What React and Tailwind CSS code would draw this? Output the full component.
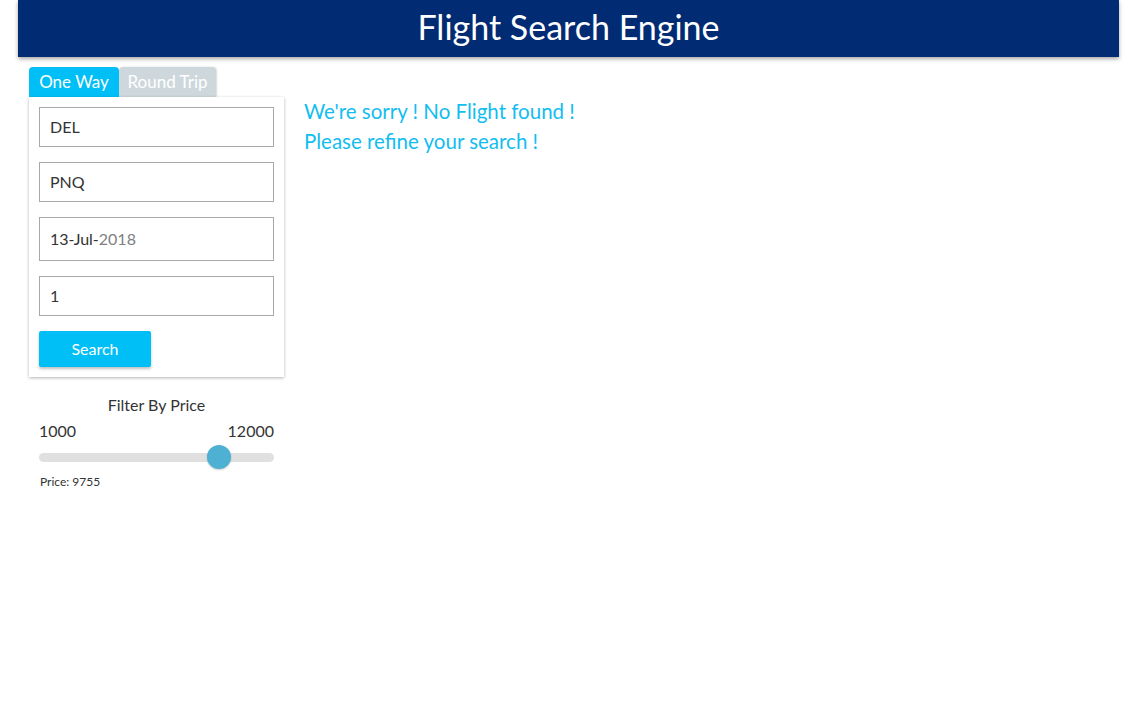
import React from "react";

export default function App() {
  return (
    <div className="min-h-[720px] bg-white" style={{ fontFamily: "Lato, 'Open Sans', sans-serif" }}>
      <header className="ml-[18px] w-[1101px] h-[57px] bg-[#012b73] flex items-center justify-center pb-[3px] shadow-[0_2px_4px_rgba(0,0,0,0.35)]">
        <h1 className="text-white text-[34px] leading-none font-normal">Flight Search Engine</h1>
      </header>
      <div className="flex mt-[10px] ml-[29px]">
        <div className="w-[255px] flex flex-col">
          <div className="flex h-[30px]">
            <button className="w-[90px] h-full bg-[#00bff6] text-white text-[17px] rounded-t-[4px] flex items-center justify-center">One Way</button>
            <button className="w-[97px] h-full bg-[#ced8dc] text-white text-[17px] rounded-t-[4px] flex items-center justify-center shadow-[1px_0_2px_rgba(0,0,0,0.15)]">Round Trip</button>
          </div>
          <div className="bg-white shadow-[0_1px_3px_rgba(0,0,0,0.3)] px-[10px] pt-[10px] pb-[10px] flex flex-col">
            <div className="h-[40px] border border-[#a8a8a8] flex items-center px-[10px] text-[16px] text-[#333]">DEL</div>
            <div className="h-[40px] mt-[15px] border border-[#a8a8a8] flex items-center px-[10px] text-[16px] text-[#333]">PNQ</div>
            <div className="h-[44px] mt-[15px] border border-[#a8a8a8] flex items-center px-[10px] text-[16px] text-[#333]">
              <span>13-Jul-</span><span className="text-[#808080]">2018</span>
            </div>
            <div className="h-[40px] mt-[15px] border border-[#a8a8a8] flex items-center px-[10px] text-[16px] text-[#333]">1</div>
            <button className="mt-[15px] w-[112px] h-[36px] bg-[#00bff6] text-white text-[16px] rounded-[2px] shadow-[0_2px_3px_rgba(0,0,0,0.25)]">Search</button>
          </div>
          <div className="px-[10px] mt-[18px]">
            <div className="text-center text-[16px] text-[#333] leading-[20px]">Filter By Price</div>
            <div className="flex justify-between text-[16px] text-[#333] leading-[20px] mt-[6px]">
              <span>1000</span>
              <span>12000</span>
            </div>
            <div className="relative h-[24px] mt-[4px] flex items-center">
              <div className="w-full h-[9px] rounded-full bg-[#e0e0e0]"></div>
              <div className="absolute left-[168px] top-0 w-[24px] h-[24px] rounded-full bg-[#4eb0d3] shadow-[0_1px_2px_rgba(0,0,0,0.2)]"></div>
            </div>
            <div className="text-[12px] text-[#333] mt-[4px] ml-[1px]">Price: 9755</div>
          </div>
        </div>
        <div className="ml-[20px] mt-[29px] text-[#12bdf0] text-[20.5px] leading-[30px]">
          <div>We're sorry ! No Flight found !</div>
          <div>Please refine your search !</div>
        </div>
      </div>
    </div>
  );
}
